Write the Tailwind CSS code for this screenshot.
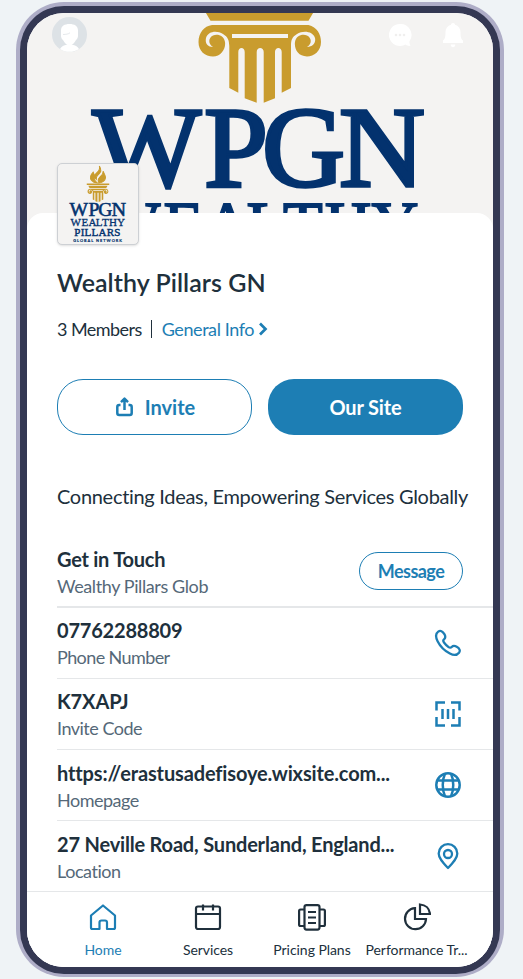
<!DOCTYPE html>
<html lang="en">
<head>
<meta charset="utf-8">
<title>Wealthy Pillars GN</title>
<script src="https://cdn.jsdelivr.net/npm/@tailwindcss/browser@4"></script>
</head>
<body class="h-[979px] overflow-hidden bg-[#eff3f6] pt-[2px] pl-4 font-['Lato',sans-serif] text-[#20303c]">
<svg class="hidden">
  <symbol id="brand" overflow="visible">
    <g fill="#c99c2e">
      <path stroke="#c99c2e" stroke-width="6" d="M268-108c8 24-8 32-20 44-12 12-8 26 2 34-2-18 8-24 16-32 12-10 14-26 2-46zM232-72c-16 16-22 32-10 48 8 10 22 14 34 15-14-10-20-20-18-32 1-10 2-18-6-31zM290-78c2 20-10 28-20 36-10 9-12 20-4 33 20-2 36-12 38-30 1-14-8-24-14-39z"/>
      <path d="M194-6H326V3H194zM203 8H316L308.500 20.700H210.500z"/>
      <path fill-rule="evenodd" d="M212 25H308.500C317 27 321 34 321 42C321 51 314 56.500 307 56.500C298 56.500 294 49 295 42C296 36 302 33.500 307 35.500C312 38 312 44 307 47C313 47 316 43 315 38C313 31 303 30 297 34C292 37 291 40 291 46V88L281.700 92.700V52C281.700 46.500 275 46.500 275 52V98.300L263.700 102.700V52C263.700 46.500 256.700 46.500 256.700 52V102.700L244.700 98.300V52C244.700 46.500 238.300 46.500 238.300 52V92.700L229.300 88V46C229 40 228 37 223 34C217 30 208 31 206 38C205 43 207 47 213 47C208 44 208 38 213 35.500C218 33.500 224 36 225 42C226 49 221 56.500 213 56.500C205 56.500 198.500 51 198.500 42C198.500 33 204 26 212 25zM232 34V38H288V34z"/>
    </g>
    <g fill="#03326e" stroke="#03326e" font-family="'Liberation Serif',serif">
      <g font-size="115" stroke-width="3.400">
        <text x="92.500 204 262" y="186">WPG</text>
        <text x="339" y="186" textLength="86" lengthAdjust="spacingAndGlyphs">N</text>
      </g>
      <text x="99 163.500 204 246.500 283 324.500 371.500" y="247" font-size="65" stroke-width="1.800">WEALTHY</text>
      <text x="121" y="305" font-size="65" stroke-width="2.500" textLength="271">PILLARS</text>
      <text x="114" y="336" font-size="23" stroke-width="1" font-family="Lato,sans-serif" font-weight="bold" textLength="287">GLOBAL NETWORK</text>
    </g>
  </symbol>
</svg>

<div class="h-[975px] w-[488px] rounded-[48px] bg-[#aeadc7] px-1 pt-1 pb-[3px]">
  <div class="h-full rounded-[44px] bg-[#343853] p-[7px]">
    <main class="relative flex h-full flex-col overflow-hidden rounded-[37px] bg-white">
      <header class="relative h-[216px] shrink-0 overflow-hidden bg-[#f4f3f2]">
        <svg class="absolute inset-0" width="466" height="216" viewBox="27 13 466 216"><use href="#brand"/></svg>
        <div class="relative flex items-center pt-1 pr-7 pl-[25px]">
          <svg width="35" height="35" viewBox="0 0 35 35"><circle cx="17.500" cy="17.500" r="17.500" fill="#dde2e6"/><path fill="#fff" d="M9 13.500C9 9 12.500 7 17.500 7S26 9 26 13.500V19c0 1.500-.8 3-2 4-1.500 3-3.500 5-6.500 5S12.500 26 11 23c-1.200-1-2-2.500-2-4zM8 32c1.500-3 4-4 6.500-4.300h6C23 28 25.500 29 27 32c-5 3.600-13.500 4-19 0z"/><path d="M11 17.500c3 0 5.500-.5 7-1.700" fill="none" stroke="#e6e9ec"/></svg>
          <svg class="ml-auto" width="24" height="24" viewBox="0 0 24 24" fill="#fff"><path d="M12 1a11 11 0 1 0 5.500 20.500c1.800 1.500 3.500 1.500 5 1.300-.8-1.500-1.300-3-1-4.500A11 11 0 0 0 12 1z"/><g fill="#f0efee"><circle cx="8" cy="12" r="1.300"/><circle cx="12" cy="12" r="1.300"/><circle cx="16" cy="12" r="1.300"/></g></svg>
          <svg class="ml-[29px]" width="24" height="26" viewBox="0 0 24 26" fill="#fff"><path d="M12 1c1.200 0 2 .8 2 1.700 3.500 1 5.500 3.800 5.500 7.300 0 5 .5 7 2.500 8.500V21H2v-2.500C4 17 4.500 15 4.500 10c0-3.500 2-6.300 5.500-7.300C10 1.800 10.800 1 12 1zM9.700 22.500h4.600c0 2-1 2.700-2.300 2.700s-2.300-.7-2.300-2.700z"/></svg>
        </div>
      </header>

      <section class="relative -mt-4 flex-1 rounded-t-[16px] bg-white pl-[30px]">
        <div class="-mt-[50px] h-[82px] w-[82px] overflow-hidden rounded-[5px] border border-[#cdd0d4] bg-[#f4f3f2] shadow-sm">
          <svg width="80" height="80" viewBox="25 -120 470 470"><use href="#brand"/></svg>
        </div>
        <h1 class="mt-[21px] text-[25px] leading-[32px] font-semibold tracking-[0.05px]">Wealthy Pillars GN</h1>
        <div class="mt-[19px] flex h-6 items-center text-[18px] leading-6 tracking-[-0.55px]">
          <span>3 Members</span>
          <span class="mr-[10px] ml-[9px] h-[18px] w-px bg-[#20303c]"></span>
          <span class="tracking-[-0.42px] text-[#1d7eb4]">General Info</span>
          <svg class="ml-1" width="10" height="14" viewBox="0 0 10 14" fill="none" stroke="#1d7eb4" stroke-width="2.700"><path d="M2 1.500 7.500 7 2 12.500"/></svg>
        </div>
        <div class="mt-[38px] flex gap-4 text-[20px] font-bold">
          <button class="flex h-14 w-[195px] items-center justify-center gap-3 rounded-[26px] border border-[#1d7eb4] pl-[2px] text-[#1d7eb4]">
            <svg width="17" height="20" viewBox="0 0 17 20" fill="none" stroke="#1d7eb4" stroke-width="2.500" stroke-linejoin="round"><path d="M4.500 8H3.200Q1.300 8 1.300 10V16Q1.300 18 3.200 18H13.800Q15.700 18 15.700 16V10Q15.700 8 13.800 8H12.500M8.500 13V3M5 5.200 8.500 1.700 12 5.200"/></svg>
            <span>Invite</span>
          </button>
          <button class="h-14 w-[195px] rounded-[26px] bg-[#1d7eb4] tracking-[-0.15px] text-white">Our Site</button>
        </div>
        <p class="mt-[48px] text-[20px] leading-[26px] tracking-[-0.3px] whitespace-nowrap">Connecting Ideas, Empowering Services Globally</p>

        <div class="mt-[35px] leading-[27px]">
          <div class="flex h-[64px] items-start justify-between border-b-2 border-[#e5e7e9] pr-[30px]">
            <div class="pt-[2px]">
              <h2 class="text-[20px] font-bold tracking-[-0.25px]">Get in Touch</h2>
              <p class="text-[18px] tracking-[-0.4px] text-[#556878]">Wealthy Pillars Glob</p>
            </div>
            <button class="mt-[8px] h-[38px] w-[104px] shrink-0 rounded-[19px] border border-[#1d7eb4] text-[18px] font-bold tracking-[-0.55px] text-[#1d7eb4]">Message</button>
          </div>
          <div class="flex h-[71px] items-center justify-between border-b border-[#e5e7e9] pr-[31px]">
            <div class="pt-[2px]">
              <h2 class="text-[20px] font-bold tracking-[-0.2px]">07762288809</h2>
              <p class="text-[18px] tracking-[-0.6px] text-[#556878]">Phone Number</p>
            </div>
            <svg width="28" height="28" viewBox="0 0 28 28" fill="none" stroke="#1d7eb4" stroke-width="2.300" stroke-linejoin="round"><path d="M4.200 2.600C6.500 1 8.600 2.200 10.400 5.200 12 7.900 11.600 9 10 10.300 8.700 11.400 9 12.300 10.200 13.800 11.400 15.400 12.600 16.800 14.200 17.800 15.800 19 16.700 19.100 17.700 18 19.100 16.500 20.200 16.300 22.700 17.800 25.600 19.500 26.600 21.600 25 23.700 23 26.200 19.800 26.600 15.900 24.500 10.300 21.600 6.300 17.600 3.600 12.200 1.500 8 1.700 4.400 4.200 2.600z"/></svg>
          </div>
          <div class="flex h-[71px] items-center justify-between border-b border-[#e5e7e9] pr-[31px]">
            <div class="pt-[2px]">
              <h2 class="text-[20px] font-bold tracking-[-0.1px]">K7XAPJ</h2>
              <p class="text-[18px] tracking-[-0.5px] text-[#556878]">Invite Code</p>
            </div>
            <svg width="28" height="28" viewBox="0 0 28 28" fill="none" stroke="#1d7eb4" stroke-width="2.500"><path d="M2.500 10.500V2.500H11M17 2.500h8.500v8M25.500 17v8.500H17M11 25.500H2.500V17M8.500 9v10M14 9v10M19.500 9v10"/></svg>
          </div>
          <div class="flex h-[71px] items-center justify-between border-b border-[#e5e7e9] pr-[31px]">
            <div class="pt-[3px]">
              <h2 class="text-[20px] font-bold tracking-[-0.14px]">https://erastusadefisoye.wixsite.com...</h2>
              <p class="text-[18px] tracking-[-0.5px] text-[#556878]">Homepage</p>
            </div>
            <svg width="28" height="28" viewBox="0 0 28 28" fill="none" stroke="#1d7eb4" stroke-width="2.500"><circle cx="14" cy="14" r="11.700"/><path d="M11 2.700C8 9 8 19 11 25.300M17 2.700c3 6.300 3 16.300 0 22.600M3.500 9.500h21M3.500 18.500h21"/></svg>
          </div>
          <div class="flex h-[70px] items-center justify-between pr-[31px]">
            <div class="pt-[3px]">
              <h2 class="text-[20px] font-bold tracking-[-0.19px]">27 Neville Road, Sunderland, England...</h2>
              <p class="text-[18px] tracking-[-0.45px] text-[#556878]">Location</p>
            </div>
            <svg width="28" height="28" viewBox="0 0 28 28" fill="none" stroke="#1d7eb4" stroke-width="2.300"><path d="M14 26C9 20.800 4.700 16.500 4.700 11.500a9.300 9.300 0 0 1 18.600 0c0 5-4.300 9.300-9.300 14.500z" stroke-linejoin="round"/><circle cx="14" cy="12" r="4"/></svg>
          </div>
        </div>
      </section>

      <nav class="absolute inset-x-0 bottom-0 flex h-[76px] border-t border-[#e5e7e9] bg-white pr-[19px] pl-[23px] text-[14px] leading-[18px] tracking-[-0.05px]">
        <a class="flex w-[106px] flex-col items-center text-[#1d7eb4]"><svg class="mt-3 mb-[9px]" width="28" height="28" viewBox="0 0 28 28" fill="none" stroke="currentColor" stroke-width="2.200" stroke-linejoin="round"><path d="M2 11.500 14 1.500 26 11.500V23.500Q26 25 24.500 25H18V18.500Q18 16.500 16 16.500H12.500Q10.500 16.500 10.500 18.500V25H3.500Q2 25 2 23.500z"/></svg>Home</a>
        <a class="flex w-[104px] flex-col items-center"><svg class="mt-3 mb-[9px]" width="28" height="28" viewBox="0 0 28 28" fill="none" stroke="currentColor" stroke-width="2.200"><rect x="2" y="2.500" width="24" height="22.500" rx="2"/><path d="M2 10h24M9 .5v6M19 .5v6"/></svg>Services</a>
        <a class="flex w-[104px] flex-col items-center"><svg class="mt-3 mb-[9px]" width="28" height="28" viewBox="0 0 28 28" fill="none" stroke="currentColor" stroke-width="2.200"><rect x="6.500" y="1.100" width="15" height="24.500" rx="2"/><path d="M6.500 5.500H2.500Q1.100 5.500 1.100 7V20.500Q1.100 22 2.500 22H6.500M21.500 5.500H25.500Q26.900 5.500 26.900 7V20.500Q26.900 22 25.500 22H21.500M10 8h8M10 13.500h8M10 19h8"/></svg><span class="whitespace-nowrap">Pricing Plans</span></a>
        <a class="flex w-[105px] flex-col items-center"><svg class="mt-[11px] mb-[10px]" width="28" height="28" viewBox="0 0 28 28" fill="none" stroke="currentColor" stroke-width="2.200"><path d="M12 5.200A10.500 10.500 0 1 0 23 16H12z"/><path d="M17 1.500V11H27C26.500 5.500 22.500 1.800 17 1.500z"/></svg><span class="whitespace-nowrap">Performance Tr...</span></a>
      </nav>
    </main>
  </div>
</div>
</body>
</html>
